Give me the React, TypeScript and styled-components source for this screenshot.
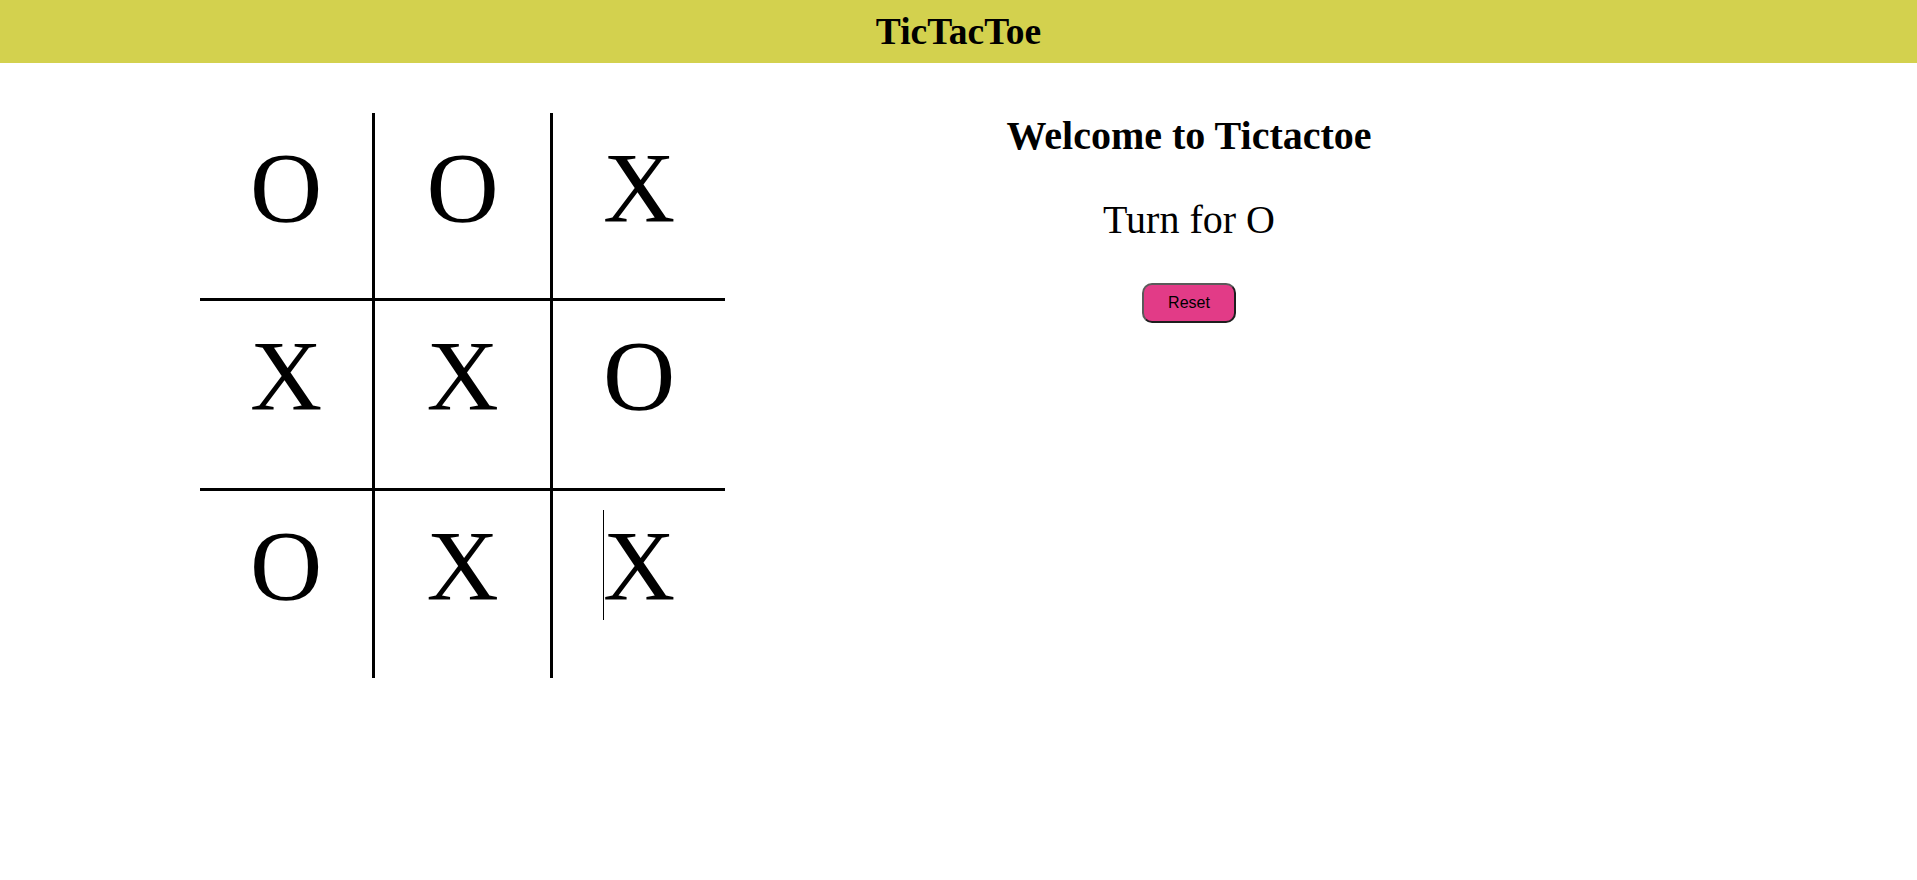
import { FC } from "react"
import styled, { createGlobalStyle } from "styled-components"

const GlobalStyle = createGlobalStyle`
  html, body {
    margin: 0;
    padding: 0;
    background: #ffffff;
    font-family: "Liberation Serif", "Times New Roman", serif;
    color: #000000;
  }
`

const Header = styled.header`
  height: 63px;
  background: #d3d14e;
  display: flex;
  align-items: center;
  justify-content: center;
`

const Title = styled.h1`
  margin: 0;
  font-size: 37.5px;
  font-weight: 700;
`

const Main = styled.main`
  display: flex;
  align-items: flex-start;
  padding: 50px 0 0 200px;
`

const Board = styled.div`
  display: grid;
  grid-template-columns: 175px 178px 172px;
  grid-template-rows: 188px 190px 187px;
`

const Cell = styled.div<{ $right: boolean; $bottom: boolean }>`
  box-sizing: border-box;
  padding-top: 17px;
  text-align: center;
  font-size: 100px;
  line-height: normal;
  border-right: ${(p) => (p.$right ? "3px solid #000" : "none")};
  border-bottom: ${(p) => (p.$bottom ? "3px solid #000" : "none")};
`

const Caret = styled.span`
  display: inline-block;
  width: 1px;
  height: 110px;
  margin-right: -1px;
  vertical-align: -21px;
  background: #000;
`

const Info = styled.section`
  width: 928px;
  display: flex;
  flex-direction: column;
  align-items: center;
`

const Welcome = styled.h2`
  margin: -1px 0 0;
  font-size: 40px;
  font-weight: 700;
`

const Turn = styled.p`
  margin: 37px 0 0;
  font-size: 40px;
`

const ResetButton = styled.button`
  margin-top: 40px;
  width: 94px;
  height: 40px;
  box-sizing: border-box;
  background: #e23b87;
  border: 2px solid;
  border-color: #5a5a5a #1e1e1e #1e1e1e #5a5a5a;
  border-radius: 10px;
  font-family: "Liberation Sans", Arial, sans-serif;
  font-size: 16px;
  color: #000;
  cursor: pointer;
`

const cells = ["O", "O", "X", "X", "X", "O", "O", "X", "X"]
const focused = 8

const App: FC = () => {
  return (
    <>
      <GlobalStyle />
      <Header>
        <Title>TicTacToe</Title>
      </Header>

      <Main>
        <Board>
          {cells.map((value, i) => (
            <Cell key={i} $right={i % 3 !== 2} $bottom={i < 6}>
              {i === focused && <Caret />}
              {value}
            </Cell>
          ))}
        </Board>

        <Info>
          <Welcome>Welcome to Tictactoe</Welcome>
          <Turn>Turn for O</Turn>
          <ResetButton>Reset</ResetButton>
        </Info>
      </Main>
    </>
  )
}

export default App
